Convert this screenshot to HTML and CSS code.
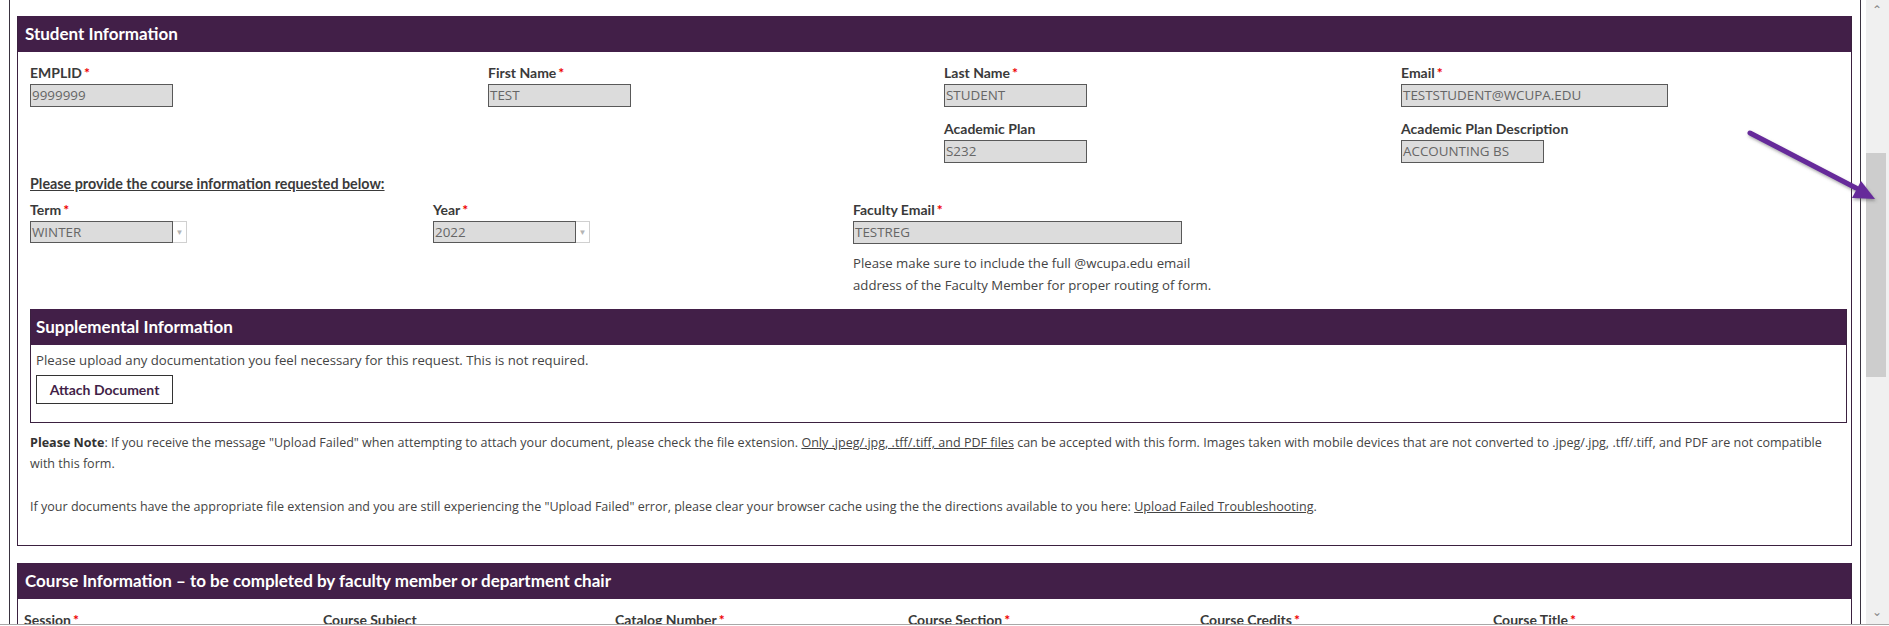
FILE: index.html
```html
<!DOCTYPE html>
<html>
	<head>
		<title>Course Request Form</title>
		<link rel="stylesheet" href="styles.css">
	</head>
	<body>
		<div class="screen">
			<div class="viewport">
				<div class="frame">
					<div class="section">
						<h2 class="section_head">Student Information</h2>
						<div class="section_body">
							<div class="grid4">
								<div class="field">
									<label>EMPLID<span class="req">*</span></label>
									<div class="input">9999999</div>
								</div>
								<div class="field">
									<label>First Name<span class="req">*</span></label>
									<div class="input">TEST</div>
								</div>
								<div class="field">
									<label>Last Name<span class="req">*</span></label>
									<div class="input">STUDENT</div>
								</div>
								<div class="field">
									<label>Email<span class="req">*</span></label>
									<div class="input wide">TESTSTUDENT@WCUPA.EDU</div>
								</div>
								<div class="field col3">
									<label>Academic Plan</label>
									<div class="input">S232</div>
								</div>
								<div class="field">
									<label>Academic Plan Description</label>
									<div class="input">ACCOUNTING BS</div>
								</div>
							</div>

							<p class="request_title">Please provide the course information requested below:</p>

							<div class="grid3">
								<div class="field">
									<label>Term<span class="req">*</span></label>
									<div class="select"><span class="select_val">WINTER</span><span class="select_btn">&#9660;</span></div>
								</div>
								<div class="field">
									<label>Year<span class="req">*</span></label>
									<div class="select"><span class="select_val">2022</span><span class="select_btn">&#9660;</span></div>
								</div>
								<div class="field">
									<label>Faculty Email<span class="req">*</span></label>
									<div class="input faculty">TESTREG</div>
									<p class="help">Please make sure to include the full @wcupa.edu email address of the Faculty Member for proper routing of form.</p>
								</div>
							</div>

							<div class="supp">
								<h2 class="supp_head">Supplemental Information</h2>
								<div class="supp_body">
									<p>Please upload any documentation you feel necessary for this request. This is not required.</p>
									<button type="button" class="attach">Attach Document</button>
								</div>
							</div>

							<p class="note"><b>Please Note</b>: If you receive the message "Upload Failed" when attempting to attach your document, please check the file extension. <u>Only .jpeg/.jpg, .tff/.tiff, and PDF files</u> can be accepted with this form. Images taken with mobile devices that are not converted to .jpeg/.jpg, .tff/.tiff, and PDF are not compatible with this form.</p>
							<p class="note second">If your documents have the appropriate file extension and you are still experiencing the "Upload Failed" error, please clear your browser cache using the the directions available to you here: <u>Upload Failed Troubleshooting</u>.</p>
						</div>
					</div>

					<div class="section course">
						<h2 class="section_head">Course Information &ndash; to be completed by faculty member or department chair</h2>
						<div class="section_body">
							<div class="grid6">
								<label>Session<span class="req">*</span></label>
								<label>Course Subject</label>
								<label>Catalog Number<span class="req">*</span></label>
								<label>Course Section<span class="req">*</span></label>
								<label>Course Credits<span class="req">*</span></label>
								<label>Course Title<span class="req">*</span></label>
							</div>
						</div>
					</div>
				</div>
			</div>
			<div class="scrollbar">
				<div class="scroll_btn">&#8963;</div>
				<div class="scroll_thumb"></div>
				<div class="scroll_rest"></div>
				<div class="scroll_btn down">&#8964;</div>
			</div>
			<svg class="pointer" width="160" height="100" viewBox="0 0 160 100">
				<defs>
					<filter id="shade" x="-20%" y="-20%" width="140%" height="160%">
						<feDropShadow dx="1" dy="2" stdDeviation="1.5" flood-color="#555" flood-opacity="0.5"/>
					</filter>
				</defs>
				<g filter="url(#shade)">
					<line x1="10" y1="13" x2="116" y2="68" stroke="#66299a" stroke-width="5" stroke-linecap="round"/>
					<polygon points="135,79 112,78 121,61" fill="#66299a"/>
				</g>
			</svg>
		</div>
	</body>
</html>
```

FILE: styles.css
```css
body {
	margin : 0;
	background-color : #fff;
	font-family : "Open Sans", sans-serif;
	font-size : 13.2px;
	color : #444;
}

.screen {
	position : relative;
	display : flex;
	height : 624px;
	overflow : hidden;
	border-bottom : 1px solid #a8a8a8;
}

.viewport {
	width : 1866px;
	padding-left : 9px;
	box-sizing : border-box;
}

.frame {
	width : 1852px;
	height : 100%;
	box-sizing : border-box;
	border-left : 1px solid #3a3340;
	border-right : 1px solid #3a3340;
	padding : 16px 8px 0 7px;
}

.section {
	border : 1px solid #3b2140;
	border-top : none;
}

.section_head, .supp_head {
	margin : 0;
	background-color : #421f48;
	color : #fff;
	font-family : Lato, sans-serif;
	font-weight : bold;
	font-size : 17px;
	height : 36px;
	line-height : 36px;
	padding-left : 7px;
}

.section_body {
	padding : 13px 4px 28px 12px;
}

label {
	display : block;
	font-family : Lato, sans-serif;
	font-weight : bold;
	font-size : 14px;
	line-height : 16px;
	color : #3a3a3a;
}
.req {
	color : #e00;
	margin-left : 2px;
}

.grid4 {
	display : grid;
	grid-template-columns : 458px 456px 457px 1fr;
	row-gap : 14px;
}
.col3 {
	grid-column : 3;
}

.input {
	margin-top : 3px;
	width : 143px;
	height : 23px;
	box-sizing : border-box;
	border : 1px solid #595959;
	background-color : #dcdcdc;
	color : #666;
	font-size : 13.4px;
	line-height : 21px;
	padding-left : 1px;
	white-space : nowrap;
	overflow : hidden;
}
.input.wide {
	width : 267px;
}
.input.faculty {
	width : 329px;
}

.request_title {
	margin : 13px 0 0 0;
	font-family : Lato, sans-serif;
	font-weight : bold;
	font-size : 14.3px;
	line-height : 16px;
	color : #3a3a3a;
	text-decoration : underline;
}

.grid3 {
	display : grid;
	grid-template-columns : 403px 420px 1fr;
	margin-top : 10px;
}

.select {
	display : flex;
	margin-top : 3px;
	width : 157px;
	height : 22px;
}
.select_val {
	width : 143px;
	box-sizing : border-box;
	border : 1px solid #595959;
	background-color : #dcdcdc;
	color : #666;
	font-size : 13.4px;
	line-height : 20px;
	padding-left : 1px;
}
.select_btn {
	flex : 1;
	border : 1px solid #d0d0d0;
	border-left : none;
	color : #b4b4b4;
	font-size : 8px;
	line-height : 20px;
	text-align : center;
}

.help {
	margin : 8px 0 0 0;
	width : 380px;
	line-height : 22px;
	color : #444;
}

.supp {
	margin-top : 13px;
	border : 1px solid #3b2140;
	border-top : none;
}
.supp_head {
	padding-left : 5px;
}
.supp_body {
	padding : 6px 5px 18px 5px;
}
.supp_body p {
	margin : 0;
	line-height : 18px;
}

.attach {
	display : block;
	margin-top : 6px;
	width : 137px;
	height : 29px;
	background-color : #fff;
	border : 1px solid #333;
	color : #421f48;
	font-family : Lato, sans-serif;
	font-weight : bold;
	font-size : 14px;
	padding : 0;
}

.note {
	margin : 9px 0 0 0;
	font-size : 12.55px;
	line-height : 21px;
}
.note b {
	color : #333;
}
.note.second {
	margin-top : 22px;
}

.course {
	margin-top : 17px;
}
.course .section_body {
	padding : 13px 4px 0 6px;
}
.grid6 {
	display : grid;
	grid-template-columns : 299px 292px 293px 292px 293px 1fr;
}

.scrollbar {
	flex : 1;
	display : flex;
	flex-direction : column;
	background-color : #f0f0f0;
}
.scroll_btn {
	height : 17px;
	color : #8a8a8a;
	font-size : 12px;
	line-height : 20px;
	text-align : center;
	padding-right : 2px;
}
.scroll_btn.down {
	line-height : 10px;
}
.scroll_thumb {
	margin : 136px 3px 0 0;
	height : 224px;
	background-color : #cdcdcd;
}
.scroll_rest {
	flex : 1;
}

.pointer {
	position : absolute;
	left : 1740px;
	top : 120px;
}
```
